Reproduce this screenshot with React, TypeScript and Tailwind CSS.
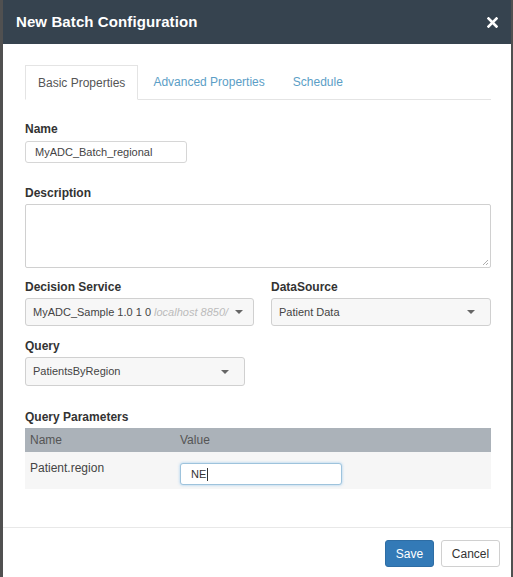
import React from 'react'

const font = { fontFamily: '"Liberation Sans", Arial, sans-serif' }

function Caret() {
  return (
    <svg width="8" height="4" viewBox="0 0 8 4" className="shrink-0">
      <path d="M0 0 L8 0 L4 4 Z" fill="#666" />
    </svg>
  )
}

function Label({ children, className = '' }: { children: React.ReactNode; className?: string }) {
  return <div className={`text-[12px] font-bold text-[#333] leading-[17px] ${className}`}>{children}</div>
}

export default function App() {
  return (
    <div className="w-[513px] h-[577px] bg-[#505050] flex overflow-hidden" style={font}>
      <div className="ml-[3px] w-[508px] h-full bg-white flex flex-col">
        {/* header */}
        <div className="h-[44px] shrink-0 bg-[#36434f] flex items-center justify-between pl-[13px] pr-[13px]">
          <span className="text-white text-[15px] font-bold tracking-[0.1px]">New Batch Configuration</span>
          <svg width="11" height="11" viewBox="0 0 11 11">
            <path d="M1.5 1.5 L9.5 9.5 M9.5 1.5 L1.5 9.5" stroke="#fff" strokeWidth="2.6" strokeLinecap="square" />
          </svg>
        </div>

        {/* body */}
        <div className="flex-1 pl-[22px] pr-[17px] pt-[22px]">
          <div className="w-[466px] flex items-end border-b border-[#e4e4e4] h-[34px]">
            <div className="h-[35px] -mb-px px-[12px] flex items-center border border-[#e4e4e4] border-b-white bg-white text-[12px] text-[#555]">
              Basic Properties
            </div>
            <div className="h-[34px] pl-[15px] pr-[14px] flex items-center text-[12px] text-[#5b9ec6]">Advanced Properties</div>
            <div className="h-[34px] px-[14px] flex items-center text-[12px] text-[#5b9ec6]">Schedule</div>
          </div>

          <Label className="mt-[21px]">Name</Label>
          <div className="mt-[3px] w-[162px] h-[22px] border border-[#d6d6d6] rounded-[3px] flex items-center px-[9px] text-[11px] text-[#444]">
            MyADC_Batch_regional
          </div>

          <Label className="mt-[22px]">Description</Label>
          <div className="mt-[2px] w-[466px] h-[64px] border border-[#d0d0d0] rounded-[2px] relative">
            <svg width="7" height="7" viewBox="0 0 7 7" className="absolute right-[1px] bottom-[1px]">
              <path d="M6 1 L1 6 M6 4 L4 6" stroke="#999" strokeWidth="0.8" />
            </svg>
          </div>

          <div className="flex mt-[11px]">
            <div className="w-[229px]">
              <Label>Decision Service</Label>
              <div className="mt-[2px] h-[28px] border border-[#d0d0d0] rounded-[3px] bg-[#f7f7f7] flex items-center pl-[7px] pr-[10px] text-[11px] text-[#444]">
                <span className="whitespace-nowrap overflow-hidden flex-1">
                  MyADC_Sample 1.0 1 0 <span className="italic text-[#bbb]">localhost 8850/</span>
                </span>
                <span className="ml-[3px]"><Caret /></span>
              </div>
            </div>
            <div className="w-[220px] ml-[17px]">
              <Label>DataSource</Label>
              <div className="mt-[2px] h-[28px] border border-[#d0d0d0] rounded-[3px] bg-[#f7f7f7] flex items-center justify-between pl-[7px] pr-[15px] text-[11px] text-[#444]">
                <span>Patient Data</span>
                <Caret />
              </div>
            </div>
          </div>

          <Label className="mt-[12px]">Query</Label>
          <div className="mt-[2px] w-[220px] h-[29px] border border-[#d0d0d0] rounded-[3px] bg-[#f7f7f7] flex items-center justify-between pl-[7px] pr-[15px] text-[11px] text-[#444]">
            <span>PatientsByRegion</span>
            <Caret />
          </div>

          <Label className="mt-[23px]">Query Parameters</Label>
          <div className="mt-[2px] w-[466px]">
            <div className="h-[24px] bg-[#abb2b9] flex items-center text-[12px] text-[#555]">
              <span className="w-[155px] pl-[5px]">Name</span>
              <span>Value</span>
            </div>
            <div className="h-[37px] bg-[#f6f6f6] flex text-[12px] text-[#444]">
              <span className="w-[155px] pl-[5px] pt-[7px]">Patient.region</span>
              <div className="mt-[11px] w-[162px] h-[22px] bg-white border border-[#9ec3dc] rounded-[3px] shadow-[0_0_3px_rgba(102,175,233,0.6)] flex items-center pl-[10px] text-[11px] text-[#333]">
                NE<span className="inline-block w-px h-[13px] bg-[#333] ml-px" />
              </div>
            </div>
          </div>
        </div>

        {/* footer */}
        <div className="h-[50px] shrink-0 border-t border-[#e8e8e8] flex items-start justify-end gap-[7px] pr-[11px] pt-[12px]">
          <div className="w-[49px] h-[27px] rounded-[3px] bg-[#337ab7] border border-[#2e6da4] text-white text-[12px] flex items-center justify-center">
            Save
          </div>
          <div className="w-[59px] h-[27px] rounded-[3px] bg-white border border-[#d0d0d0] text-[#333] text-[12px] flex items-center justify-center">
            Cancel
          </div>
        </div>
      </div>
    </div>
  )
}
